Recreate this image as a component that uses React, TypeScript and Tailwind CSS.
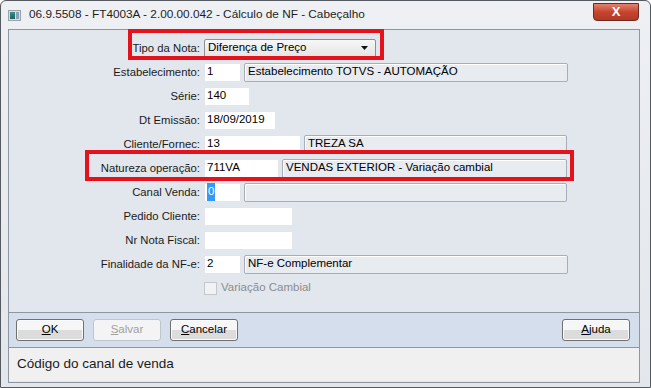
const font = { fontFamily: '"Liberation Sans", Arial, sans-serif' };

function Label({ children }: { children: React.ReactNode }) {
	return (
		<div className="w-[195px] shrink-0 pr-[4px] text-right text-[11.3px] text-[#1b1b1b]">
			{children}
		</div>
	);
}

function Input({ value, w, selected }: { value?: string; w: number; selected?: boolean }) {
	return (
		<div
			className="flex h-[19px] shrink-0 items-center border border-[#e2e5ea] bg-white px-[2px] text-[11.5px] text-black"
			style={{ width: w }}
		>
			{selected ? <span className="bg-[#3399ff] px-[1px] text-white">{value}</span> : value}
		</div>
	);
}

function Desc({ value, w }: { value?: string; w: number }) {
	return (
		<div
			className="ml-[3px] flex h-[19px] shrink-0 items-center rounded-[2px] border border-[#a7aeb7] bg-[#e8ebf0] px-[3px] text-[11.5px] text-black shadow-[inset_1px_1px_0_#ffffff]"
			style={{ width: w }}
		>
			{value}
		</div>
	);
}

function Row({ children }: { children: React.ReactNode }) {
	return <div className="relative flex h-[24px] items-center">{children}</div>;
}

function Btn({ children, disabled }: { children: React.ReactNode; disabled?: boolean }) {
	return (
		<div
			className={
				disabled
					? "flex h-[22px] w-[68px] items-center justify-center rounded-[3px] border border-[#bfc5cc] bg-[#f4f4f4] text-[11.5px] text-[#a0a0a0]"
					: "flex h-[22px] w-[68px] items-center justify-center rounded-[3px] border border-[#707070] bg-gradient-to-b from-[#f6f6f6] from-50% to-[#dcdcdc] to-50% text-[11.5px] text-black shadow-[inset_0_0_0_1px_#fbfbfb]"
			}
		>
			{children}
		</div>
	);
}

export default function App() {
	return (
		<div className="h-[388px] w-[651px] overflow-hidden bg-white" style={font}>
			<div className="flex h-[388px] w-[651px] flex-col rounded-t-[6px] border border-[#555a60] bg-gradient-to-b from-[#eef0f3] to-[#e3e6ea]">
				{/* title bar */}
				<div className="flex h-[28px] shrink-0 items-center pl-[7px] pr-[9px]">
					<div className="flex h-[11px] w-[13px] items-center gap-[1px] border border-[#9aa3ad] bg-[#d9dee4] px-[1px]">
						<div className="h-[7px] w-[6px] bg-gradient-to-b from-[#3a8f8a] to-[#22615e]" />
						<div className="h-[7px] w-[3px] bg-[#8aa2b5]" />
					</div>
					<div className="ml-[8px] text-[11.8px] text-[#1e1e1e]">
						06.9.5508 - FT4003A - 2.00.00.042 - Cálculo de NF - Cabeçalho
					</div>
					<div className="ml-auto -mt-[7px] mr-[2px] flex h-[18px] w-[46px] items-center justify-center rounded-b-[4px] border border-[#6d2a22] bg-gradient-to-b from-[#e0826f] via-[#c8432d] to-[#b13a26]">
						<span className="text-[13px] font-bold leading-none text-white">X</span>
					</div>
				</div>

				<div className="ml-[7px] mr-[10px] flex flex-1 flex-col border border-[#8d96a1]">
					{/* form */}
					<div className="flex h-[283px] flex-col border-b border-[#8d96a1] bg-[#e2e6ed] pt-[6px]">
						<Row>
							<div className="pointer-events-none absolute left-[119px] top-[-7px] h-[31px] w-[256px] border-[4px] border-[#e3121d]" />
							<Label>Tipo da Nota:</Label>
							<div className="flex h-[19px] w-[172px] items-center justify-between rounded-[2px] border border-[#8e8f8f] bg-gradient-to-b from-[#f7f7f7] to-[#e4e4e4] pl-[3px] pr-[7px] text-[11.5px]">
								<span>Diferença de Preço</span>
								<svg width="7" height="4" viewBox="0 0 7 4">
									<path d="M0 0 H7 L3.5 4 Z" fill="#111" />
								</svg>
							</div>
						</Row>
						<Row>
							<Label>Estabelecimento:</Label>
							<Input value="1" w={37} />
							<Desc value="Estabelecimento TOTVS - AUTOMAÇÃO" w={324} />
						</Row>
						<Row>
							<Label>Série:</Label>
							<Input value="140" w={46} />
						</Row>
						<Row>
							<Label>Dt Emissão:</Label>
							<Input value="18/09/2019" w={72} />
						</Row>
						<Row>
							<Label>Cliente/Fornec:</Label>
							<Input value="13" w={97} />
							<Desc value="TREZA SA" w={263} />
						</Row>
						<Row>
							<div className="pointer-events-none absolute left-[76px] top-[-6px] h-[31px] w-[489px] border-[4px] border-[#e3121d]" />
							<Label>Natureza operação:</Label>
							<Input value="711VA" w={75} />
							<Desc value="VENDAS EXTERIOR - Variação cambial" w={285} />
						</Row>
						<Row>
							<Label>Canal Venda:</Label>
							<Input value="0" w={37} selected />
							<Desc w={323} />
						</Row>
						<Row>
							<Label>Pedido Cliente:</Label>
							<Input w={89} />
						</Row>
						<Row>
							<Label>Nr Nota Fiscal:</Label>
							<Input w={89} />
						</Row>
						<Row>
							<Label>Finalidade da NF-e:</Label>
							<Input value="2" w={37} />
							<Desc value="NF-e Complementar" w={324} />
						</Row>
						<Row>
							<div className="w-[195px] shrink-0" />
							<div className="h-[13px] w-[13px] border border-[#c4c8cd] bg-[#f1f2f4]" />
							<span className="ml-[4px] text-[11.5px] text-[#8d8d8d]">Variação Cambial</span>
						</Row>
					</div>

					{/* buttons */}
					<div className="flex h-[35px] items-center gap-[9px] border-b border-[#8d96a1] bg-[#d5deed] pl-[7px] pr-[9px]">
						<Btn>
							<span>
								<u>O</u>K
							</span>
						</Btn>
						<Btn disabled>
							<span>
								<u>S</u>alvar
							</span>
						</Btn>
						<Btn>
							<span>
								<u>C</u>ancelar
							</span>
						</Btn>
						<div className="ml-auto">
							<Btn>
								<span>
									<u>A</u>juda
								</span>
							</Btn>
						</div>
					</div>

					{/* status */}
					<div className="flex h-[33px] items-center bg-[#f0f0f0] pl-[8px] text-[13.5px] text-[#1b1b1b]">
						Código do canal de venda
					</div>
				</div>
				<div className="h-[4px] shrink-0" />
			</div>
		</div>
	);
}
